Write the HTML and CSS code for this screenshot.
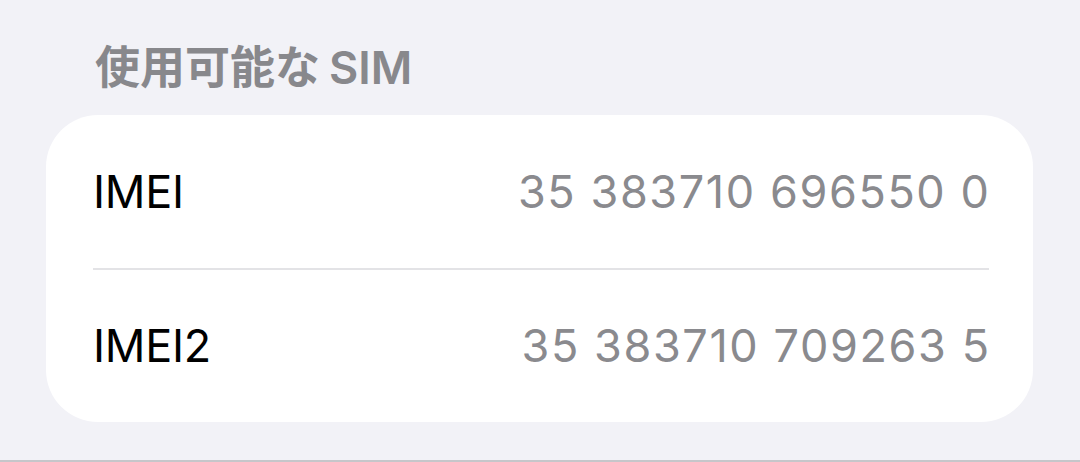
FILE: index.html
```html
<!DOCTYPE html>
<html lang="ja">
<head>
<meta charset="utf-8">
<link rel="stylesheet" href="styles.css">
</head>
<body>
<div class="screen">
  <div class="section-title">使用可能な<span class="title-latin">SIM</span></div>
  <div class="card">
    <div class="row">
      <span class="label">IMEI</span>
      <span class="value">35 383710 696550 0</span>
    </div>
    <div class="divider"></div>
    <div class="row">
      <span class="label">IMEI2</span>
      <span class="value">35 383710 709263 5</span>
    </div>
  </div>
</div>
</body>
</html>
```
FILE: styles.css
```css
html, body {
  margin: 0;
  padding: 0;
  background: #f2f2f7;
}
.screen {
  width: 1080px;
  height: 462px;
  box-sizing: border-box;
  padding: 0 47px 0 46px;
  font-family: Inter, "Liberation Sans", "Noto Sans CJK JP", sans-serif;
  border-bottom: 2px solid #c6c6ca;
  display: flex;
  flex-direction: column;
  overflow: hidden;
}
.section-title {
  height: 115px;
  box-sizing: border-box;
  padding: 40px 0 0 49px;
  font-family: Inter, "Noto Sans CJK JP", sans-serif;
  font-size: 45px;
  font-weight: 600;
  line-height: 56px;
  color: #88888c;
}
.title-latin {
  margin-left: 9px;
}
.card {
  background: #ffffff;
  border-radius: 52px;
  padding: 0 44px 0 47px;
  height: 307px;
  box-sizing: border-box;
  display: flex;
  flex-direction: column;
}
.row {
  flex: 1;
  display: flex;
  align-items: center;
  justify-content: space-between;
  font-size: 45px;
  letter-spacing: -0.3px;
}
.label {
  color: #000000;
}
.value {
  color: #8a8a8e;
  letter-spacing: 1.6px;
  margin-right: -1.6px;
}
.divider {
  height: 2px;
  background: #e3e3e6;
}
```
